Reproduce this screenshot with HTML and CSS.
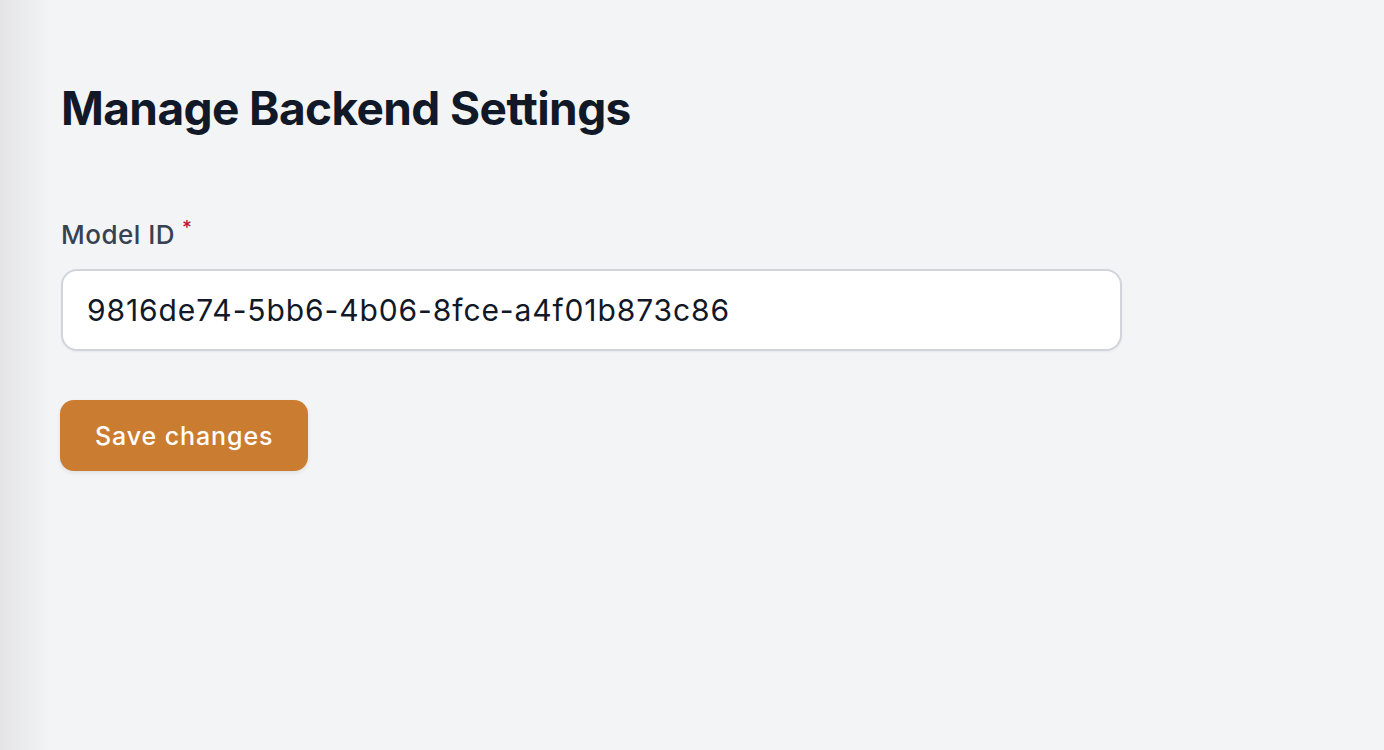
FILE: index.html
```html
<!DOCTYPE html>
<html lang="en">
<head>
<meta charset="utf-8">
<title>Manage Backend Settings</title>
<link rel="stylesheet" href="styles.css">
</head>
<body>
<div class="page">
  <div class="edge"></div>
  <main class="content">
    <h1 class="title">Manage Backend Settings</h1>
    <form class="form">
      <label class="label" for="model-id">Model ID<span class="req">*</span></label>
      <input class="input" id="model-id" type="text" value="9816de74-5bb6-4b06-8fce-a4f01b873c86">
      <div class="actions">
        <button class="btn" type="button">Save changes</button>
      </div>
    </form>
  </main>
</div>
</body>
</html>
```
FILE: styles.css
```css
* { box-sizing: border-box; }
html, body { margin: 0; height: 100%; }
body {
  background: #f3f4f6;
  font-family: Inter, "Open Sans", "Liberation Sans", sans-serif;
  color: #111827;
}
.page {
  display: flex;
  min-height: 100vh;
}
.edge {
  width: 50px;
  flex: none;
  background: linear-gradient(to right, #e4e4e6, #f3f4f6);
}
.content {
  flex: 1;
  padding: 78px 0 0 11px;
}
.title {
  margin: 0;
  font-size: 46px;
  font-weight: 700;
  letter-spacing: -0.6px;
  line-height: 60px;
  color: #111827;
}
.form {
  margin-top: 81px;
  width: 1061px;
  display: flex;
  flex-direction: column;
}
.label {
  font-size: 26px;
  font-weight: 500;
  letter-spacing: 0.5px;
  color: #374151;
  line-height: 32px;
}
.req {
  color: #be123c;
  font-size: 19px;
  vertical-align: top;
  margin-left: 7px;
  line-height: 18px;
}
.input {
  margin-top: 18px;
  height: 82px;
  border: 2px solid #d1d5db;
  border-radius: 16px;
  background: #fff;
  padding: 0 24px;
  font-family: inherit;
  font-size: 30px;
  letter-spacing: 0.9px;
  color: #111827;
  box-shadow: 0 1px 2px rgba(0,0,0,0.05);
  outline: none;
}
.actions {
  margin-top: 49px;
}
.btn {
  height: 71px;
  padding: 0 35px;
  border: none;
  border-radius: 14px;
  background: #ca7c30;
  color: #fff;
  font-family: inherit;
  font-size: 25px;
  font-weight: 500;
  letter-spacing: 0.9px;
  box-shadow: 0 2px 4px rgba(0,0,0,0.08);
  margin-left: -1px;
}
```
